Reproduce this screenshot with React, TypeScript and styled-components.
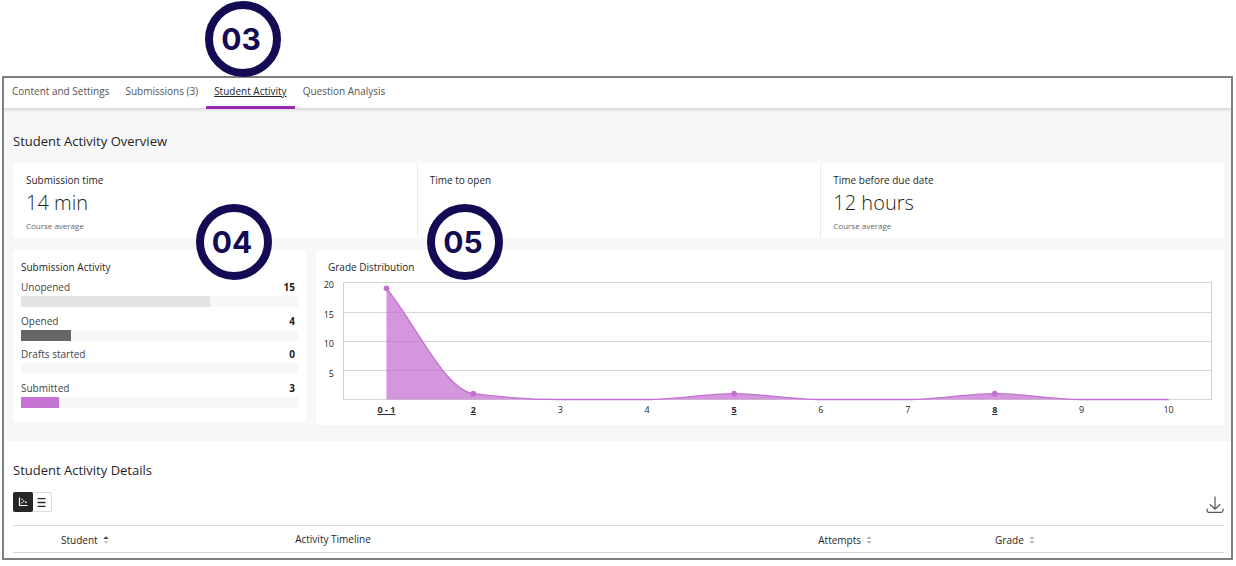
import React, { useState } from "react";
import styled, { createGlobalStyle } from "styled-components";

const GlobalStyle = createGlobalStyle`
  *, *::before, *::after { box-sizing: border-box; }
  body {
    margin: 0;
    background: #fff;
    color: #1f1f1f;
    font-family: "Open Sans", "Noto Sans", sans-serif;
    font-size: 10px;
    line-height: 16px;
  }
  h1, h2, h3, p, ul, dl, dd { margin: 0; padding: 0; }
  button { font: inherit; color: inherit; border: 0; padding: 0; background: none; cursor: pointer; }
`;

const Page = styled.div`
  position: relative;
  padding: 76px 3px 6px 2px;
`;

const Frame = styled.main`
  border: 2px solid #7f7f7f;
`;

const Marker = styled.span<{ $left: number; $top: number }>`
  position: absolute;
  left: ${(p) => p.$left}px;
  top: ${(p) => p.$top}px;
  z-index: 2;
  display: flex;
  align-items: center;
  justify-content: center;
  width: 76px;
  height: 76px;
  padding-right: 4px;
  border: 8px solid #130b54;
  border-radius: 50%;
  background: #fff;
  color: #130b54;
  font-family: Inter, sans-serif;
  font-size: 30px;
  font-weight: 700;
  line-height: 32px;
`;

const TabBar = styled.nav`
  display: flex;
  height: 32px;
  background: #fff;
  border-bottom: 2px solid #dedede;
`;

const Tab = styled.a<{ $active?: boolean }>`
  height: 31px;
  padding: 5px 8px 0;
  border-bottom: 3px solid ${(p) => (p.$active ? "#9c27b0" : "transparent")};
  color: ${(p) => (p.$active ? "#262626" : "#555")};
  font-weight: 500;
  text-decoration: ${(p) => (p.$active ? "underline" : "none")};
`;

const Overview = styled.section`
  padding: 20px 7px 16px 9px;
  background: #f7f7f7;
  border-top: 2px solid #efefef;
`;

const SectionTitle = styled.h2`
  font-size: 13px;
  font-weight: 500;
  line-height: 18px;
`;

const Stats = styled.div`
  display: grid;
  grid-template-columns: repeat(3, 1fr);
  margin: 13px 0 12px;
  background: #fff;
`;

const Stat = styled.div`
  height: 75px;
  padding: 9px 13px;
  & + & { border-left: 1px solid #ebebeb; padding-left: 12px; }
`;

const CardTitle = styled.h3`
  font-size: 10px;
  font-weight: 500;
  line-height: 16px;
`;

const StatValue = styled.p`
  font-size: 20px;
  font-weight: 300;
  line-height: 30px;
`;

const StatNote = styled.p`
  color: #666;
  font-size: 8px;
  line-height: 16px;
`;

const Panels = styled.div`
  display: grid;
  grid-template-columns: 293fr 908fr;
  gap: 10px;
  align-items: start;
`;

const ActivityCard = styled.div`
  padding: 9px 8px 10px;
  background: #fff;
`;

const ActivityList = styled.ul`
  display: grid;
  grid-template-rows: repeat(4, 1fr);
  height: 134px;
  margin-top: 3px;
  list-style: none;
`;

const ActivityHead = styled.div`
  display: flex;
  justify-content: space-between;
  padding-right: 3px;
  line-height: 18px;
  color: #444;
  strong { color: #1a1a1a; font-weight: 700; }
`;

const Track = styled.div`
  height: 11px;
  background: #f7f7f7;
`;

const Fill = styled.div<{ $color: string }>`
  height: 100%;
  background: ${(p) => p.$color};
`;

const GradeCard = styled.div`
  padding: 9px 12px 5px;
  background: #fff;
`;

const Chart = styled.div`
  display: grid;
  grid-template-columns: 15px 1fr;
  margin-top: 7px;
  font-size: 9px;
`;

const YAxis = styled.div`
  display: grid;
  grid-template-rows: repeat(4, 1fr);
  height: 118px;
  margin-left: -8px;
  padding-right: 9px;
  text-align: right;
  line-height: 6px;
`;

const Plot = styled.svg`
  display: block;
  width: 100%;
  height: 118px;
  overflow: visible;
`;

const XAxis = styled.div`
  grid-column: 2;
  display: grid;
  grid-template-columns: repeat(10, 1fr);
  justify-items: center;
  line-height: 20px;
`;

const GradeLink = styled.button`
  font-weight: 700;
  color: #2b2b3a;
  text-decoration: underline;
`;

const Details = styled.section`
  padding: 20px 7px 5px 9px;
  background: #fff;
`;

const Toolbar = styled.div`
  display: flex;
  align-items: center;
  justify-content: space-between;
  margin: 11px 0 11px;
`;

const Toggle = styled.div`
  display: flex;
  height: 20px;
  border: 1px solid #dcdcdc;
  border-radius: 2px;
`;

const ToggleButton = styled.button<{ $on: boolean }>`
  display: flex;
  align-items: center;
  justify-content: center;
  width: ${(p) => (p.$on ? 20 : 19)}px;
  margin: ${(p) => (p.$on ? "-1px" : "0")};
  border-radius: 2px;
  background: ${(p) => (p.$on ? "#262626" : "transparent")};
  color: ${(p) => (p.$on ? "#fff" : "#262626")};
`;

const IconButton = styled.button`
  display: flex;
  padding-top: 6px;
  color: #555;
`;

const Table = styled.table`
  width: 100%;
  border-collapse: collapse;
  table-layout: fixed;
  border-top: 1px solid #d8d8d8;
  border-bottom: 1px solid #d8d8d8;
`;

const HeadCell = styled.th<{ $width: string; $indent?: number }>`
  width: ${(p) => p.$width};
  height: 27px;
  padding: 0 0 0 ${(p) => p.$indent ?? 0}px;
  text-align: left;
  font-weight: 500;
`;

const SortButton = styled.button`
  display: flex;
  align-items: center;
  gap: 5px;
  padding-top: 2px;
  font-weight: 500;
`;

const BINS = [
  { label: "0 - 1", value: 19 },
  { label: "2", value: 1 },
  { label: "3", value: 0 },
  { label: "4", value: 0 },
  { label: "5", value: 1 },
  { label: "6", value: 0 },
  { label: "7", value: 0 },
  { label: "8", value: 1 },
  { label: "9", value: 0 },
  { label: "10", value: 0 },
];
const MAX = 20;
const PLOT_HEIGHT = 117;

/* Monotone cubic curve through the bin centres, in a 100 x 117 space. */
function curvePath() {
  const step = 100 / BINS.length;
  const pts = BINS.map((b, i) => ({
    x: step * (i + 0.5),
    y: PLOT_HEIGHT * (1 - b.value / MAX),
  }));
  const rise = pts.slice(1).map((p, i) => p.y - pts[i].y);
  const slope = pts.map((_, i) => {
    if (i === 0) return rise[0];
    if (i === pts.length - 1) return rise[i - 1];
    const a = rise[i - 1];
    const b = rise[i];
    return a * b <= 0 ? 0 : (2 * a * b) / (a + b);
  });
  let d = `M${pts[0].x} ${pts[0].y}`;
  for (let i = 1; i < pts.length; i++) {
    const p = pts[i - 1];
    const q = pts[i];
    d += ` C${p.x + step / 3} ${p.y + slope[i - 1] / 3} ${q.x - step / 3} ${q.y - slope[i] / 3} ${q.x} ${q.y}`;
  }
  return d;
}

function GradePlot() {
  const line = curvePath();
  return (
    <Plot role="img" aria-label="Grade distribution">
      {[0, 30, 59, 88, 117].map((y) => (
        <rect key={y} x="0" y={y} width="100%" height="1" fill="#d6d6d6" />
      ))}
      <rect x="0" y="0" width="1" height="118" fill="#d0d0d0" />
      <svg x="100%" y="0" width="1" height="118" overflow="visible">
        <rect x="-1" width="1" height="118" fill="#d0d0d0" />
      </svg>
      <svg y="0.5" width="100%" height={PLOT_HEIGHT} viewBox={`0 0 100 ${PLOT_HEIGHT}`} preserveAspectRatio="none" overflow="visible">
        <path d={`${line} L95 ${PLOT_HEIGHT} L5 ${PLOT_HEIGHT} Z`} fill="#c574d3" fillOpacity="0.75" />
        <path d={line} fill="none" stroke="#c26fd1" strokeWidth="1.3" vectorEffect="non-scaling-stroke" />
      </svg>
      {BINS.map((b, i) =>
        b.value > 0 ? (
          <circle key={b.label} cx={`${i * 10 + 5}%`} cy={PLOT_HEIGHT * (1 - b.value / MAX) + 0.5} r="2.8" fill="#c26fd1" />
        ) : null
      )}
    </Plot>
  );
}

const ACTIVITY = [
  { label: "Unopened", count: 15, color: "#e3e3e3" },
  { label: "Opened", count: 4, color: "#666" },
  { label: "Drafts started", count: 0, color: "#999" },
  { label: "Submitted", count: 3, color: "#c574d3" },
];

const STATS = [
  { title: "Submission time", value: "14 min", note: "Course average" },
  { title: "Time to open" },
  { title: "Time before due date", value: "12 hours", note: "Course average" },
];

const TABS = ["Content and Settings", "Submissions (3)", "Student Activity", "Question Analysis"];

const SortIcon = ({ up }: { up?: boolean }) => (
  <svg width="6" height="8" viewBox="0 0 6 8" aria-hidden="true">
    <path d="M0.3 3 L3 0.3 L5.7 3Z" fill={up ? "#444" : "#b5b5b5"} />
    <path d="M0.3 5 L3 7.7 L5.7 5Z" fill={up ? "#c4c4c4" : "#b5b5b5"} />
  </svg>
);

export default function App() {
  const [view, setView] = useState("plot");
  return (
    <>
      <GlobalStyle />
      <Page>
        <Marker $left={205} $top={1}>03</Marker>
        <Marker $left={196} $top={204}>04</Marker>
        <Marker $left={427} $top={204}>05</Marker>
        <Frame>
          <TabBar>
            {TABS.map((t) => (
              <Tab key={t} href="#" $active={t === "Student Activity"}>{t}</Tab>
            ))}
          </TabBar>
          <Overview>
            <SectionTitle>Student Activity Overview</SectionTitle>
            <Stats>
              {STATS.map((s) => (
                <Stat key={s.title}>
                  <CardTitle>{s.title}</CardTitle>
                  {s.value && <StatValue>{s.value}</StatValue>}
                  {s.note && <StatNote>{s.note}</StatNote>}
                </Stat>
              ))}
            </Stats>
            <Panels>
              <ActivityCard>
                <CardTitle>Submission Activity</CardTitle>
                <ActivityList>
                  {ACTIVITY.map((a) => (
                    <li key={a.label}>
                      <ActivityHead>
                        <span>{a.label}</span>
                        <strong>{a.count}</strong>
                      </ActivityHead>
                      <Track>
                        <Fill $color={a.color} style={{ width: `${(a.count / 22) * 100}%` }} />
                      </Track>
                    </li>
                  ))}
                </ActivityList>
              </ActivityCard>
              <GradeCard>
                <CardTitle>Grade Distribution</CardTitle>
                <Chart>
                  <YAxis>
                    {[20, 15, 10, 5].map((n) => <span key={n}>{n}</span>)}
                  </YAxis>
                  <GradePlot />
                  <XAxis>
                    {BINS.map((b) =>
                      b.value > 0 ? (
                        <GradeLink key={b.label} type="button">{b.label}</GradeLink>
                      ) : (
                        <span key={b.label}>{b.label}</span>
                      )
                    )}
                  </XAxis>
                </Chart>
              </GradeCard>
            </Panels>
          </Overview>
          <Details>
            <SectionTitle>Student Activity Details</SectionTitle>
            <Toolbar>
              <Toggle>
                <ToggleButton type="button" aria-label="Plot view" $on={view === "plot"} onClick={() => setView("plot")}>
                  <svg width="10" height="10" viewBox="0 0 10 10" aria-hidden="true">
                    <path d="M1.5 0.5V8.5H9.5" fill="none" stroke="currentColor" strokeWidth="1.2" />
                    <path d="M3.4 1.8h1.3v1.3H3.4zM3.4 5h1.3v1.3H3.4zM5 3.4h1.3v1.3H5zM7 4.4h1.5v1.5H7z" fill="currentColor" />
                  </svg>
                </ToggleButton>
                <ToggleButton type="button" aria-label="List view" $on={view === "list"} onClick={() => setView("list")}>
                  <svg width="9" height="9" viewBox="0 0 9 9" aria-hidden="true">
                    <path d="M0.5 0.7H8.5M0.5 4.5H8.5M0.5 8.3H8.5" stroke="currentColor" strokeWidth="1.3" />
                  </svg>
                </ToggleButton>
              </Toggle>
              <IconButton type="button" aria-label="Download">
                <svg width="18" height="18" viewBox="0 0 18 18" fill="none" stroke="currentColor" strokeWidth="1.2" aria-hidden="true">
                  <path d="M9 0.5V13M3.8 8.2L9 13.2L14.2 8.2M1 12.6V14.6Q1 16.4 2.8 16.4H15.2Q17 16.4 17 14.6V12.6" />
                </svg>
              </IconButton>
            </Toolbar>
            <Table>
              <thead>
                <tr>
                  <HeadCell $width="23.3%" $indent={48}>
                    <SortButton type="button">Student <SortIcon up /></SortButton>
                  </HeadCell>
                  <HeadCell $width="43.2%">Activity Timeline</HeadCell>
                  <HeadCell $width="14.6%">
                    <SortButton type="button">Attempts <SortIcon /></SortButton>
                  </HeadCell>
                  <HeadCell $width="18.9%">
                    <SortButton type="button">Grade <SortIcon /></SortButton>
                  </HeadCell>
                </tr>
              </thead>
            </Table>
          </Details>
        </Frame>
      </Page>
    </>
  );
}
